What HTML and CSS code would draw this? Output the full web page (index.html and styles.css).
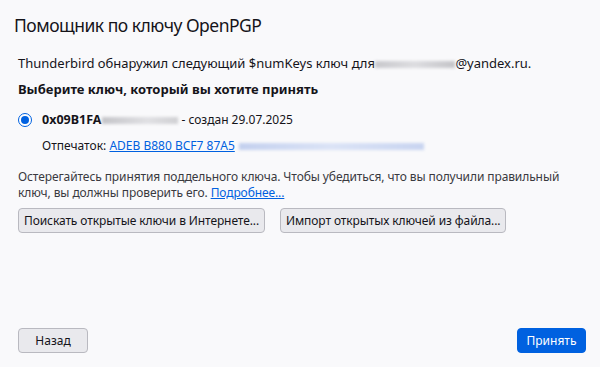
FILE: index.html
```html
<!DOCTYPE html>
<html lang="ru">
<head>
<meta charset="utf-8">
<link rel="stylesheet" href="styles.css">
</head>
<body>
<div class="dialog">
  <h1 class="title">Помощник по ключу OpenPGP</h1>
  <p class="intro">Thunderbird обнаружил следующий $numKeys ключ для <span class="blur blur-email"></span>@yandex.ru.</p>
  <p class="choose">Выберите ключ, который вы хотите принять</p>
  <div class="key">
    <span class="radio"><span class="dot"></span></span>
    <div class="key-info">
      <div class="key-line"><b class="key-id">0x09B1FA</b><span class="blur blur-id"></span>- создан 29.07.2025</div>
      <div class="fp-line">Отпечаток: <a class="link" href="#">ADEB B880 BCF7 87A5</a><span class="blur blur-fp"></span></div>
    </div>
  </div>
  <p class="warn">Остерегайтесь принятия поддельного ключа. Чтобы убедиться, что вы получили правильный ключ, вы должны проверить его. <a class="link" href="#">Подробнее...</a></p>
  <div class="actions">
    <button class="btn">Поискать открытые ключи в Интернете...</button>
    <button class="btn">Импорт открытых ключей из файла...</button>
  </div>
  <div class="spacer"></div>
  <div class="footer">
    <button class="btn btn-back">Назад</button>
    <button class="btn btn-primary">Принять</button>
  </div>
</div>
</body>
</html>
```
FILE: styles.css
```css
html, body {
  margin: 0;
  padding: 0;
  background: #f9f9fb;
}
body {
  font-family: "Noto Sans", "Open Sans", sans-serif;
  font-size: 13px;
  color: #15141a;
}
.dialog {
  width: 600px;
  height: 367px;
  box-sizing: border-box;
  padding: 12px 14px 14px 18px;
  display: flex;
  flex-direction: column;
}
.title {
  font-size: 17.5px;
  letter-spacing: -0.5px;
  font-weight: 400;
  margin: 0 0 0 -4px;
  line-height: 26px;
}
.intro {
  margin: 16px 0 0;
  line-height: 18px;
}
.choose {
  margin: 8px 0 0;
  font-weight: 700;
  line-height: 18px;
}
.key {
  display: flex;
  align-items: flex-start;
  gap: 10px;
  margin-top: 13px;
}
.radio {
  width: 14px;
  height: 14px;
  border: 1px solid #0061e0;
  border-radius: 50%;
  box-sizing: border-box;
  display: flex;
  align-items: center;
  justify-content: center;
  margin-top: 2px;
  background: #fff;
}
.dot {
  width: 8px;
  height: 8px;
  border-radius: 50%;
  background: #0061e0;
}
.key-info {
  display: flex;
  flex-direction: column;
  gap: 8px;
  font-size: 12px;
}
.key-id {
  font-size: 12.5px;
}
.key-line, .fp-line {
  line-height: 18px;
}
.blur {
  display: inline-block;
  height: 7px;
  vertical-align: middle;
  filter: blur(1.5px);
}
.blur-email {
  width: 80px;
  margin-left: -3px;
  background: linear-gradient(90deg, #c8c8cc, #dddde0 50%, #c4c4c8);
}
.blur-id {
  width: 76px;
  margin: 0 3px 0 1px;
  background: linear-gradient(90deg, #c4c4c8, #e0e0e3 60%, #d0d0d3);
}
.blur-fp {
  width: 185px;
  margin-left: 4px;
  background: linear-gradient(90deg, #c3d0ee, #dbe3f6 50%, #c8d4f0);
}
.link {
  color: #0061e0;
  text-decoration: underline;
}
.warn {
  margin: 14px 0 0;
  font-size: 12px;
  line-height: 16px;
  color: #3a3a3f;
  letter-spacing: -0.1px;
}
.actions {
  display: flex;
  gap: 15px;
  margin-top: 7px;
}
.btn {
  font-family: inherit;
  font-size: 12px;
  color: #15141a;
  background: #e9e9ed;
  border: 1px solid #b9b9c0;
  border-radius: 4px;
  height: 25px;
  padding: 0 5px;
  line-height: 23px;
}
.actions .btn {
  letter-spacing: -0.1px;
}
.spacer {
  flex: 1;
}
.footer {
  display: flex;
  justify-content: space-between;
}
.btn-back {
  width: 70px;
}
.btn-primary {
  width: 69px;
  background: #0061e0;
  border-color: #0061e0;
  color: #fff;
}
```
